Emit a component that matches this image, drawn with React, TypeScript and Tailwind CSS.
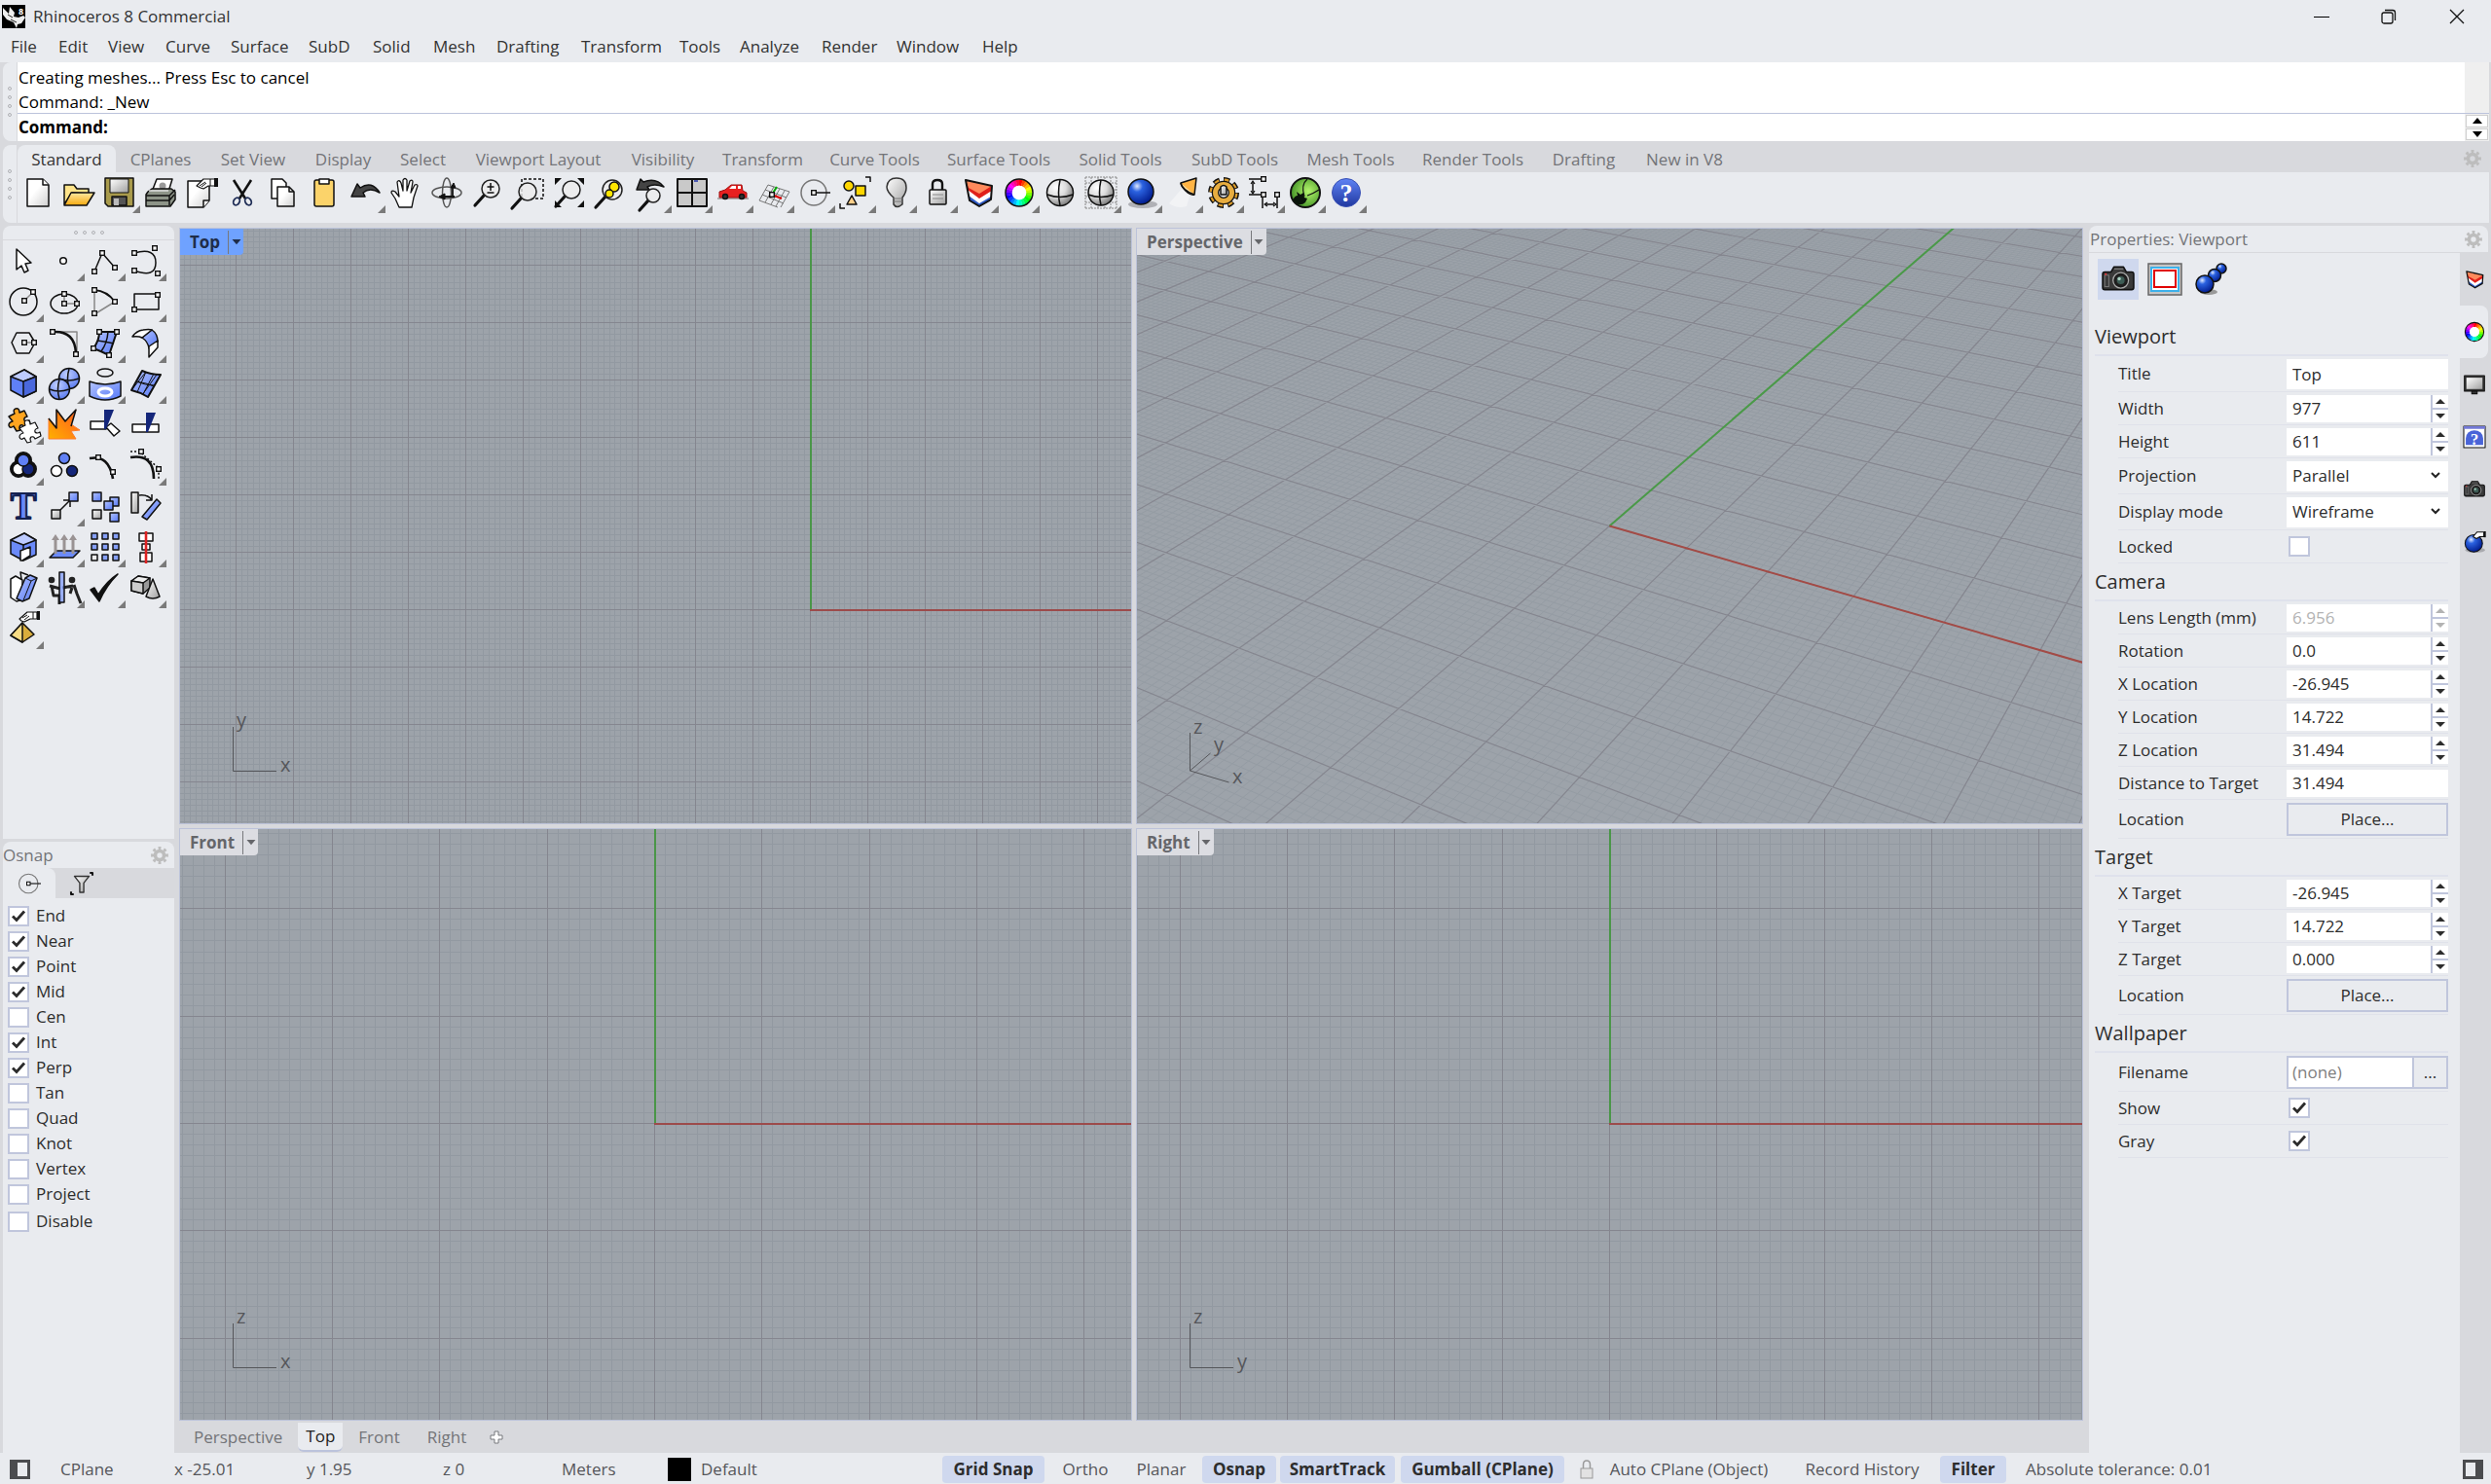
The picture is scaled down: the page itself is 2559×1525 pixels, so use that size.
import React, { ReactNode, useState } from 'react';
import clsx from 'clsx';

type Tool = { name: string; icon: ReactNode; more?: boolean };

/* ---------- icon helpers ---------- */

const Ico = ({ children, className = 'size-8' }: { children: ReactNode; className?: string }) => (
  <svg
    viewBox="0 0 32 32"
    className={clsx('block shrink-0 overflow-visible', className)}
    fill="none"
    stroke="#111"
    strokeWidth="1.5"
    strokeLinejoin="round"
    aria-hidden="true"
  >
    {children}
  </svg>
);

// small square control points
const Nodes = ({ at }: { at: [number, number][] }) => (
  <>
    {at.map(([x, y], i) => (
      <rect key={i} x={x - 2.3} y={y - 2.3} width="4.6" height="4.6" fill="#fff" strokeWidth="1.4" strokeLinejoin="miter" />
    ))}
  </>
);

const Gradients = () => (
  <svg className="absolute size-0" aria-hidden="true">
    <defs>
      <linearGradient id="blue" x1="0" y1="0" x2="1" y2="1">
        <stop offset="0" stopColor="#b4c4ff" />
        <stop offset="1" stopColor="#5578f6" />
      </linearGradient>
      <linearGradient id="gray" x1="0" y1="0" x2="1" y2="1">
        <stop offset="0" stopColor="#fff" />
        <stop offset="1" stopColor="#a0a0a0" />
      </linearGradient>
      <linearGradient id="paper" x1="0" y1="0" x2="1" y2="1">
        <stop offset="0.4" stopColor="#fff" />
        <stop offset="1" stopColor="#cfcfcf" />
      </linearGradient>
      <linearGradient id="gold" x1="0" y1="0" x2="0" y2="1">
        <stop offset="0" stopColor="#ffe9a0" />
        <stop offset="1" stopColor="#f5a90f" />
      </linearGradient>
      <linearGradient id="fire" x1="0" y1="1" x2="1" y2="0">
        <stop offset="0" stopColor="#ffb000" />
        <stop offset="1" stopColor="#ff5a1f" />
      </linearGradient>
      <linearGradient id="help" x1="0" y1="0" x2="0" y2="1">
        <stop offset="0" stopColor="#5f83f5" />
        <stop offset="1" stopColor="#2038a0" />
      </linearGradient>
      <radialGradient id="ball" cx="0.35" cy="0.3" r="0.75">
        <stop offset="0" stopColor="#fff" />
        <stop offset="0.5" stopColor="#dcdcdc" />
        <stop offset="1" stopColor="#777" />
      </radialGradient>
      <radialGradient id="blueball" cx="0.35" cy="0.28" r="0.75">
        <stop offset="0" stopColor="#dfe9ff" />
        <stop offset="0.3" stopColor="#2b62e0" />
        <stop offset="1" stopColor="#001a8c" />
      </radialGradient>
      <radialGradient id="softball" cx="0.4" cy="0.3" r="0.8">
        <stop offset="0" stopColor="#c0cfff" />
        <stop offset="1" stopColor="#4f72ee" />
      </radialGradient>
      <radialGradient id="greenball" cx="0.6" cy="0.45" r="0.65">
        <stop offset="0" stopColor="#b4f56c" />
        <stop offset="1" stopColor="#3c8d22" />
      </radialGradient>
    </defs>
  </svg>
);

const ColorWheel = ({ className }: { className?: string }) => (
  <Ico className={className}>
    <g transform="rotate(-90 16 16)">
      {Array.from({ length: 24 }, (_, i) => (
        <circle
          key={i}
          cx="16"
          cy="16"
          r="10.5"
          pathLength="24"
          stroke={`hsl(${i * 15} 100% 50%)`}
          strokeWidth="6.5"
          strokeDasharray="1.1 22.9"
          strokeDashoffset={-i}
        />
      ))}
    </g>
    <circle cx="16" cy="16" r="14" />
    <circle cx="16" cy="16" r="7.2" fill="#fff" stroke="none" />
  </Ico>
);

const LayersIcon = ({ className }: { className?: string }) => (
  <Ico className={className}>
    <g stroke="none">
      <path d="M5 16l12 9 12-7v5l-12 7-10-6z" fill="#2f5cc8" />
      <path d="M4 11l13 9 13-8-1 8-12 7-11-8z" fill="#fff" />
      <path d="M3 4l14 12 13-8v6l-13 8-12-9z" fill="#e0201a" />
      <path d="M3 3l27 6-13 8L6 11z" fill="#ff8a5c" />
    </g>
    <path d="M3 3l27 6-1 14-12 7-10-6z" strokeWidth="2" />
  </Ico>
);

const CameraIcon = ({ className }: { className?: string }) => (
  <Ico className={className}>
    <path d="M1 11q0-2 2-2h6l3-5h9l3 5h5q2 0 2 2v13q0 2-2 2H3q-2 0-2-2z" fill="#3a3a3a" />
    <path d="M12 6h9M3 12h4v11H3z" stroke="#777" strokeWidth="1" />
    <circle cx="18.5" cy="17" r="7.5" fill="#1b1b1b" stroke="#aaa" strokeWidth="1.2" />
    <circle cx="18.5" cy="17" r="4.5" fill="#3d5c55" stroke="#222" />
    <circle cx="17" cy="15.5" r="1.6" fill="#a8d0c0" stroke="none" />
    <circle cx="4" cy="11" r="1" fill="#e33" stroke="none" />
  </Ico>
);

const BlueBall = ({ className, hand }: { className?: string; hand?: boolean }) => (
  <Ico className={className}>
    <ellipse cx="17" cy="28" rx="15" ry="4" fill="#8b8b90" stroke="none" opacity="0.6" />
    <circle cx="15" cy={hand ? 18 : 15} r="13" fill="url(#blueball)" />
    {hand && <path d="M14 8l6-7h10v7h-6l-5 3z" fill="#fff" />}
    {hand && <path d="M30 0h3v9h-3z" fill="#111" stroke="none" />}
  </Ico>
);

const OsnapIcon = ({ className }: { className?: string }) => (
  <Ico className={className}>
    <circle cx="15" cy="16" r="13" stroke="#777" />
    <path d="M17 16h15" />
    <Nodes at={[[15, 16]]} />
  </Ico>
);

const Gear = () => (
  <svg viewBox="0 0 20 20" className="size-4.5 text-[#bdbdbd]" aria-hidden="true">
    <circle cx="10" cy="10" r="5" fill="none" stroke="currentColor" strokeWidth="4" />
    <circle cx="10" cy="10" r="8.3" fill="none" stroke="currentColor" strokeWidth="3.2" pathLength="16" strokeDasharray="1 1" strokeDashoffset="0.5" />
  </svg>
);

const Magnifier = ({ x = 19, y = 12, r = 9 }: { x?: number; y?: number; r?: number }) => (
  <>
    <path d={`M${x - r * 0.7} ${y + r * 0.7}L${x - r - 7} ${y + r + 8}`} strokeWidth="3.2" strokeLinecap="round" />
    <circle cx={x} cy={y} r={r} fill="#ececec" fillOpacity="0.8" stroke="#222" />
  </>
);

/* ---------- tool definitions ---------- */

const mainTools: Tool[] = [
  { name: 'New', icon: <Ico><path d="M5 2h16l6 6v22H5z" fill="url(#paper)" /><path d="M21 2v6h6" fill="#fff" /></Ico> },
  { name: 'Open', icon: <Ico><path d="M1 28V8h10l3 4h12v5l-17-1z" fill="#ffe48a" /><path d="M1 29l7-13h24l-8 13z" fill="url(#gold)" /></Ico> },
  { name: 'Save', more: true, icon: <Ico><path d="M1 1h29v29H4l-3-3z" fill="#a99b4c" /><path d="M6 2h19v14H6z" fill="url(#gray)" strokeWidth="1" /><path d="M8 20h15v9H8z" fill="#555" /><path d="M10 22h5v7h-5z" fill="#bbb" stroke="none" /></Ico> },
  { name: 'Print', icon: <Ico><path d="M7 15l5-13h16l-4 13z" fill="#fff" /><circle cx="18" cy="9" r="3.5" fill="#999" stroke="none" /><path d="M3 15l4-3h20l4 3v8l-5 7H1V18z" fill="#8d9488" /><path d="M1 19h24l6-6M1 24h24l5-6M25 19v10" /><path d="M4 14h20" stroke="#ddd" /></Ico> },
  { name: 'Notes', icon: <Ico><path d="M2 4h22v20l-6 7H2z" fill="url(#paper)" /><path d="M18 31v-7h6" fill="#fff" /><path d="M11 9l7-7h12v7h-7l-5 3-3-1z" fill="#fff" strokeWidth="1.2" /><path d="M14 9l6-4M16 10l5-4M25 2v7" strokeWidth="1" /><path d="M29 1h4v9h-4z" fill="#111" stroke="none" /></Ico> },
  { name: 'Cut', icon: <Ico><path d="M7 3l12 19M25 3L13 22" strokeWidth="2.6" /><ellipse cx="10" cy="25" rx="3" ry="4" stroke="#1e2c55" strokeWidth="1.8" transform="rotate(30 10 25)" /><ellipse cx="22" cy="25" rx="3" ry="4" stroke="#1e2c55" strokeWidth="1.8" transform="rotate(-30 22 25)" /></Ico> },
  { name: 'Copy', icon: <Ico><path d="M4 2h11l4 4v16H4z" fill="#fff" /><path d="M10 10h12l5 5v15H10z" fill="url(#paper)" /><path d="M22 10v5h5" /></Ico> },
  { name: 'Paste', icon: <Ico><rect x="6" y="3" width="20" height="27" rx="2" fill="#fbd36a" /><path d="M11 7V2h10v5z" fill="#fff" /></Ico> },
  { name: 'Undo', more: true, icon: <Ico><path d="M2 20l6-13 3 4q12-8 20 5-10-6-17 0l2 4z" fill="#444" /></Ico> },
  { name: 'Pan', icon: <Ico><path d="M9 31l-4-9-4-6q0-3 4-1l4 5L7 5q2-3 4 1l2 8V3q2-3 4 0v11l3-10q3-2 3 1l-2 11 4-8q3-1 3 1l-4 12-2 10z" fill="#fff" strokeWidth="1.3" /></Ico> },
  { name: 'Rotate view', icon: <Ico><ellipse cx="16" cy="16" rx="15" ry="6" stroke="#555" /><ellipse cx="16" cy="16" rx="4.5" ry="15" stroke="#555" /><path d="M8 20l6-3v6zM20 11l3-5 2 5z" fill="#111" strokeWidth="1" /><path d="M12 20h12M22 8v12" strokeWidth="1.8" /></Ico> },
  { name: 'Zoom dynamic', icon: <Ico><Magnifier /><path d="M15.500 10h7M19 6v8M15.500 16h7" /></Ico> },
  { name: 'Zoom window', icon: <Ico><path d="M9 20V2h22v20H18" strokeDasharray="3 2" /><Magnifier x={15} y={15} /></Ico> },
  { name: 'Zoom extents', icon: <Ico><path d="M1 1h7L1 8zM31 1h-7l7 7zM1 31h7l-7-7zM31 31h-7l7-7z" fill="#111" stroke="none" /><Magnifier x={18} y={13} /></Ico> },
  { name: 'Zoom selected', icon: <Ico><Magnifier x={18} y={13} r={10} /><circle cx="20" cy="10" r="5" fill="#ffe600" /><circle cx="15" cy="17" r="4" fill="#ffe600" /></Ico> },
  { name: 'Undo view', more: true, icon: <Ico><path d="M1 13l4-11 3 3q13-5 21 5-10-4-17 0l2 3z" fill="#444" /><Magnifier x={18} y={19} r={7} /></Ico> },
  { name: 'Four viewports', more: true, icon: <Ico><rect x="1" y="2" width="30" height="28" fill="#c9c9c9" strokeWidth="2" /><path d="M16 2v28M1 16h30" strokeWidth="2" /><path d="M18 4h4" stroke="#2233aa" /></Ico> },
  { name: 'Set view', more: true, icon: <Ico><path d="M0 22h32" stroke="#999" /><path d="M2 15l6-2 6-5h11l1 6 4 2v5H2z" fill="#e82020" stroke="#a01010" strokeWidth="1" /><path d="M12 12l3-3h4v3zM21 9h3v3h-3z" fill="#fff" stroke="none" /><circle cx="8" cy="20" r="2.500" fill="#333" /><circle cx="25" cy="20" r="2.500" fill="#333" /></Ico> },
  { name: 'CPlane', more: true, icon: <Ico><path d="M10 8l22 7M7 13l22 8M4 18l22 9M1 24l19 7M10 8L1 24M16 10L7 26M22 12l-9 16M27 14l-9 16M32 15l-9 16" stroke="#777" strokeWidth="1" /><path d="M14 18l5-8" stroke="#0a0" strokeWidth="2" /><path d="M14 18l10 4" stroke="#d00" strokeWidth="2" /><Nodes at={[[14, 18]]} /></Ico> },
  { name: 'Osnap', more: true, icon: <OsnapIcon /> },
  { name: 'Select', more: true, icon: <Ico><circle cx="9" cy="9" r="5" fill="#ffd600" /><rect x="16" y="9" width="10" height="10" fill="#ffd600" /><path d="M12 19l5 9H7z" fill="#ffd08a" /><path d="M26 0h5v5M0 27v5h5" /></Ico> },
  { name: 'Visibility', more: true, icon: <Ico><path d="M16 1q10 0 10 10 0 5-4 10v7q-6 5-9 0v-7q-7-6-7-11 1-9 10-9z" fill="url(#gray)" stroke="#333" /><path d="M13 22h9M13 25h9" stroke="#777" strokeWidth="1" /></Ico> },
  { name: 'Lock', more: true, icon: <Ico><path d="M11 13V7q0-4 5-4t5 4v6" strokeWidth="2.4" /><rect x="8" y="13" width="17" height="15" rx="1" fill="url(#gray)" /><path d="M11 18h11M11 22h11" stroke="#888" strokeWidth="1" /></Ico> },
  { name: 'Layers', more: true, icon: <LayersIcon /> },
  { name: 'Properties', more: true, icon: <ColorWheel /> },
  { name: 'Shade', icon: <Ico><circle cx="16" cy="16" r="13.500" fill="url(#ball)" /><path d="M16 3q-3 13 0 26M3 18q13 5 26 0" /></Ico> },
  { name: 'Display', more: true, icon: <Ico><path d="M0 0h32M0 6h32M0 13h32M0 20h32M0 26h32M0 32h32M0 0v32M6 0v32M13 0v32M20 0v32M26 0v32M32 0v32" stroke="#888" strokeWidth="1" strokeDasharray="2 1" /><circle cx="16" cy="16" r="13" fill="url(#ball)" /><path d="M16 3q-3 13 0 26M3 18q13 5 26 0" /></Ico> },
  { name: 'Render', more: true, icon: <BlueBall /> },
  { name: 'Spotlight', more: true, icon: <Ico><path d="M21 5L2 27q8 6 18 3l5-17z" fill="#fff" opacity="0.4" stroke="none" /><path d="M14 6l16-5-2 17q-4 1-9-4t-5-8z" fill="#ffb445" /><path d="M14 6q2 8 14 12" fill="#ffe0a0" /></Ico> },
  { name: 'Options', more: true, icon: <Ico><circle cx="16" cy="16" r="12" stroke="#111" strokeWidth="8" pathLength="16" strokeDasharray="1.2 0.8" /><circle cx="16" cy="16" r="12" stroke="#dd9d2c" strokeWidth="5" pathLength="16" strokeDasharray="0.9 1.1" strokeDashoffset="-0.15" /><circle cx="16" cy="16" r="8.500" strokeWidth="7.500" /><circle cx="16" cy="16" r="8.500" stroke="#e8ad3f" strokeWidth="5" /><path d="M13 10q3-3 6 0v8h-6z" fill="url(#gray)" /></Ico> },
  { name: 'Dimension', more: true, icon: <Ico><path d="M0 2h12M0 18h12M4 5v11M14 20v12M29 20v12M17 28h9" /><path d="M2 7l2-3 2 3M2 14l2 3 2-3M19 26l-3 2 3 2M25 26l3 2-3 2" strokeWidth="1.2" /><Nodes at={[[15, 2], [15, 18], [29, 18]]} /></Ico> },
  { name: 'Grasshopper', more: true, icon: <Ico><circle cx="16" cy="16" r="15" fill="url(#greenball)" strokeWidth="2" /><path d="M3 24q2-5 5-5l-1-4 4 3 3-2 1 5 3 1-2 4q-3 3-8 2z" fill="#0a140a" stroke="none" /><path d="M15 20q-4-12 3-18M18 19q6-2 12-6" strokeWidth="1.2" /></Ico> },
  {
    name: 'Help',
    more: true,
    icon: (
      <Ico>
        <circle cx="16" cy="16" r="14.500" fill="url(#help)" stroke="#3950b5" strokeWidth="1" />
        <text x="16" y="25" textAnchor="middle" fontFamily="Liberation Serif, serif" fontSize="26" fontWeight="700" fill="#fff" stroke="none">?</text>
      </Ico>
    ),
  },
];

const puzzle = 'M1 8l6-3q-2-4 1-5 4-1 4 4l5-2 3 6q-4 1-3 4 2 2 5 0l1 4-6 3q-1-3-4-2-2 2 0 5l-4 1-3-5q-4 3-5-1 0-3 4-4z';

const sideTools: Tool[] = [
  { name: 'Pointer', icon: <Ico><path d="M9 4v21l5-4 3 7 4-2-3-7 6-1z" fill="#fff" /></Ico> },
  { name: 'Point', more: true, icon: <Ico><circle cx="15" cy="16" r="3.300" fill="#fff" /></Ico> },
  { name: 'Polyline', more: true, icon: <Ico><path d="M5 27l8-19 13 15" /><Nodes at={[[5, 27], [13, 8], [26, 23]]} /></Ico> },
  { name: 'Curve', more: true, icon: <Ico><path d="M4 8q22-6 22 10T4 26" /><Nodes at={[[4, 8], [25, 3], [4, 26], [28, 29]]} /></Ico> },
  { name: 'Circle', more: true, icon: <Ico><circle cx="16" cy="16" r="14" /><path d="M16 16l9-9" stroke="#888" /><Nodes at={[[17, 15], [26, 6]]} /></Ico> },
  { name: 'Ellipse', more: true, icon: <Ico><ellipse cx="16" cy="18" rx="14" ry="10" /><path d="M16 8v10h13" stroke="#888" /><Nodes at={[[16, 8], [16, 18], [29, 18]]} /></Ico> },
  { name: 'Arc', more: true, icon: <Ico><path d="M5 4v25l21-13" stroke="#888" /><path d="M5 4q13 1 21 12" strokeWidth="2" /><Nodes at={[[5, 4], [5, 28], [26, 16]]} /></Ico> },
  { name: 'Rectangle', more: true, icon: <Ico><path d="M4 8h25v16H4z" /><Nodes at={[[4, 24], [28, 9]]} /></Ico> },
  { name: 'Polygon', more: true, icon: <Ico><path d="M4 16L9 6h13l6 10-6 11H9z" /><path d="M17 16h11" stroke="#888" /><Nodes at={[[17, 16], [27, 16]]} /></Ico> },
  { name: 'Fillet', more: true, icon: <Ico><path d="M4 5h25v23" stroke="#888" /><path d="M5 5q22-1 23 22" strokeWidth="2.6" /><Nodes at={[[4, 5], [28, 28]]} /></Ico> },
  { name: 'Surface', more: true, icon: <Ico><path d="M10 5h18q-4 12-8 24-8-4-16-7 6-8 6-17z" fill="url(#blue)" strokeWidth="2" /><path d="M19 5q-1 12-7 20M8 14q8 1 17 3" /><Nodes at={[[10, 5], [28, 5], [4, 22], [20, 29]]} /></Ico> },
  { name: 'Sweep', more: true, icon: <Ico><path d="M12 11l10-8q6 4 6 12l-9 7q-1-7-7-11z" fill="url(#blue)" /><path d="M2 10q4-6 11-7 6-1 9 0l-10 8q-4-2-10-1zM19 20l9-6v7l-9 10z" fill="#fff" /></Ico> },
  { name: 'Box', more: true, icon: <Ico><path d="M3 9l14-7 12 7v15l-13 6-13-7z" fill="#5f80f8" /><path d="M3 9l14-7 12 7-13 5z" fill="#bdcbff" /><path d="M16 14l13-5v15l-13 6z" fill="#4a68dc" /></Ico> },
  { name: 'Sphere', more: true, icon: <Ico><circle cx="21" cy="11" r="10.500" fill="url(#softball)" /><path d="M21 1q-3 10 0 20M11 11q9 4 20 0" /><circle cx="11" cy="22" r="10.500" fill="url(#softball)" /><path d="M11 12q-3 10 0 20M1 22q9 4 20 0" /></Ico> },
  { name: 'Boolean', more: true, icon: <Ico><ellipse cx="16" cy="5" rx="8" ry="4" /><path d="M0 14q16 6 32 0v15q-16 8-32 0z" fill="url(#blue)" /><ellipse cx="16" cy="25" rx="7" ry="4" stroke="#fff" strokeWidth="3" /></Ico> },
  { name: 'Mesh', more: true, icon: <Ico><path d="M1 23L12 3q9 4 19 4L18 30q-8-5-17-7z" fill="url(#blue)" strokeWidth="2" /><path d="M6 14q9 4 19 4M16 4L7 25M24 6L13 27M1 23l15-19M12 28L27 7M6 14l10 2 8 3" strokeWidth="1" /></Ico> },
  { name: 'Join', more: true, icon: <Ico><path d={puzzle} fill="#ffa51f" /><g transform="translate(11 12)"><path d={puzzle} fill="#fff" strokeWidth="1.2" /></g></Ico> },
  { name: 'Explode', icon: <Ico><path d="M0 31V10l9 10L8 1l9 12L28 1l-5 15 9 6-9 1 5 8z" fill="url(#fire)" strokeWidth="1" stroke="#ff7a2a" /><path d="M0 10l8 10L8 1l9 12L28 1l-5 17" /></Ico> },
  { name: 'Trim', icon: <Ico><path d="M1 13h16v8H1zM17 19l5-4 9 8-6 5z" fill="#fff" /><path d="M15 1h10l-8 20h-2z" fill="#14267a" stroke="none" /></Ico> },
  { name: 'Split', icon: <Ico><path d="M2 16h27v8H2z" fill="#fff" /><path d="M16 4h10l-8 20h-2z" fill="#14267a" stroke="none" /></Ico> },
  { name: 'Boolean union', more: true, icon: <Ico><g strokeWidth="5"><circle cx="16" cy="11" r="6.500" /><circle cx="11" cy="20" r="6.500" /><circle cx="21" cy="20" r="6.500" /></g><circle cx="11" cy="20" r="6" fill="#fff" /><circle cx="21" cy="20" r="6" fill="#14267a" /><circle cx="16" cy="11" r="6" fill="#6080f5" /></Ico> },
  { name: 'Group', icon: <Ico><circle cx="16" cy="9" r="5.500" fill="#6080f5" /><circle cx="8" cy="22" r="5.500" fill="#fff" /><circle cx="24" cy="22" r="5.500" fill="#14267a" /></Ico> },
  { name: 'Edit points', icon: <Ico><path d="M0 9q20-4 24 21" strokeWidth="2.600" /><Nodes at={[[9, 8], [24, 23]]} /></Ico> },
  { name: 'Control points', more: true, icon: <Ico><path d="M0 8q24-4 24 22" strokeWidth="2.600" /><path d="M0 2h9l20 17v12" strokeDasharray="2 2" /><Nodes at={[[11, 2], [29, 20]]} /></Ico> },
  { name: 'Text', icon: <Ico><text x="16" y="29" textAnchor="middle" fontFamily="Liberation Serif, serif" fontSize="40" fontWeight="700" fill="#6888f8" stroke="#14204f" strokeWidth="2">T</text></Ico> },
  { name: 'Move', more: true, icon: <Ico><path d="M12 20l9-9M15 10h7v7" /><rect x="3" y="20" width="9" height="9" fill="url(#gray)" /><rect x="21" y="2" width="9" height="9" fill="url(#blue)" /></Ico> },
  { name: 'Copy objects', icon: <Ico><rect x="3" y="2" width="9" height="9" fill="url(#blue)" /><rect x="21" y="7" width="9" height="9" fill="url(#blue)" /><rect x="15" y="11" width="9" height="9" fill="url(#blue)" /><rect x="3" y="20" width="9" height="9" fill="url(#gray)" /><rect x="21" y="23" width="9" height="9" fill="url(#blue)" /></Ico> },
  { name: 'Rotate', icon: <Ico><rect x="1" y="2" width="7" height="21" fill="url(#gray)" /><path d="M12 27l15-18 4 4-14 17z" fill="url(#blue)" /><path d="M9 5q9-1 13 5M22 4v6h-6" /></Ico> },
  { name: 'Extract', more: true, icon: <Ico><path d="M3 9l14-7 12 7v15l-13 6-13-7z" fill="#6b8af9" /><path d="M3 9l14-7 12 7-13 5z" fill="#bdcbff" /><path d="M16 14v16" /><path d="M13 20l10-4v9l-8 5h-2z" fill="#fff" /></Ico> },
  { name: 'Extrude', more: true, icon: <Ico><path d="M1 27l7-7h24l-7 7z" fill="#6b8af9" /><path d="M7 23V7M16 23V7M25 23V7" stroke="#9a9393" strokeWidth="3" /><path d="M3 9l4-6 4 6zM12 9l4-6 4 6zM21 9l4-6 4 6z" fill="#9a9393" stroke="none" /></Ico> },
  { name: 'Array', more: true, icon: <Ico>{[2, 13, 24].map((y) => [2, 13, 24].map((x) => <rect key={`${x}-${y}`} x={x} y={y} width="6" height="6" fill={x === 2 && y === 24 ? '#eee' : '#86a0f8'} />))}</Ico> },
  { name: 'Align', more: true, icon: <Ico><rect x="9" y="2" width="14" height="8" fill="#fff" /><rect x="12" y="13" width="8" height="6" fill="#fff" /><rect x="10" y="22" width="12" height="9" fill="#fff" /><path d="M16 0v33" stroke="#d22" strokeWidth="2.600" /></Ico> },
  { name: 'Shear', more: true, icon: <Ico><path d="M3 7l5-3 7 4v20l-6 2-6-4z" fill="#fff" /><path d="M9 27l9-21 5-3 7 3-8 21-7 3z" fill="url(#blue)" /><path d="M18 6l6 3 6-3M24 9l-8 20" strokeWidth="1" /><path d="M14 7L13 0l8 3" /></Ico> },
  { name: 'Constrain', more: true, icon: <Ico><circle cx="3" cy="8" r="3.300" fill="#222" stroke="none" /><circle cx="24" cy="8" r="3.300" fill="#222" stroke="none" /><path d="M1 14l11 3M3 14l2 10h6v9M25 14l-11 2M26 13l3 9 4 10M24 16l-2 6" strokeWidth="3" stroke="#222" /><rect x="11" y="0" width="5" height="31" fill="#86a0f8" fillOpacity="0.8" /></Ico> },
  { name: 'Check', more: true, icon: <Ico><path d="M1 18l4-2 4 7Q18 9 29 2 17 14 10 30z" fill="#111" /></Ico> },
  { name: 'Solids', more: true, icon: <Ico><path d="M1 9l7-5 12 2v10l-7 6-12-3z" fill="#999" /><path d="M1 9l7-5 12 2-7 5z" fill="#eee" /><path d="M1 9l12 2v11L1 19z" fill="#ccc" /><path d="M23 7l7 18q-7 4-14 0z" fill="url(#gray)" /></Ico> },
  { name: 'Pyramid', more: true, icon: <Ico><path d="M15 10l12 12-12 8-12-7z" fill="#d9ad3c" /><path d="M15 10v20L3 23z" fill="#f7dc84" /><path d="M12 6l8-7h10v7h-7l-6 3-3-1z" fill="#fff" strokeWidth="1.200" /><path d="M15 5l5-3M17 7l5-4M26-1v7" strokeWidth="1" /><path d="M30-2h3v9h-3z" fill="#111" stroke="none" /></Ico> },
];

const menus = [
  ['File', 'w-[49px]'], ['Edit', 'w-[51px]'], ['View', 'w-[59px]'], ['Curve', 'w-[67px]'], ['Surface', 'w-[80px]'],
  ['SubD', 'w-[66px]'], ['Solid', 'w-[62px]'], ['Mesh', 'w-[65px]'], ['Drafting', 'w-[87px]'], ['Transform', 'w-[101px]'],
  ['Tools', 'w-[62px]'], ['Analyze', 'w-[84px]'], ['Render', 'w-[77px]'], ['Window', 'w-[88px]'], ['Help', 'w-[60px]'],
];

const toolTabs = [
  ['Standard', 'w-[101px]'], ['CPlanes', 'w-[92px]'], ['Set View', 'w-[98px]'], ['Display', 'w-[87px]'], ['Select', 'w-[77px]'],
  ['Viewport Layout', 'w-[160px]'], ['Visibility', 'w-[96px]'], ['Transform', 'w-[109px]'], ['Curve Tools', 'w-[121px]'],
  ['Surface Tools', 'w-[134px]'], ['Solid Tools', 'w-[116px]'], ['SubD Tools', 'w-[119px]'], ['Mesh Tools', 'w-[119px]'],
  ['Render Tools', 'w-[132px]'], ['Drafting', 'w-[96px]'], ['New in V8', 'w-[111px]'],
];

/* ---------- small parts ---------- */

const ToolButton = ({ tool }: { tool: Tool }) => (
  <button type="button" aria-label={tool.name} className="relative grid size-10.5 shrink-0 place-items-center">
    {tool.icon}
    {tool.more && (
      <svg viewBox="0 0 8 8" className="absolute right-0 bottom-0 size-2" aria-hidden="true">
        <path d="M8 0v8H0z" fill="#7a7a7a" />
      </svg>
    )}
  </button>
);

const Dots = ({ row }: { row?: boolean }) => (
  <span className={clsx('flex gap-[5px]', row ? 'flex-row' : 'flex-col')}>
    {[0, 1, 2, 3].map((i) => (
      <span key={i} className="size-1 rounded-full border border-[#b0b1b5]" />
    ))}
  </span>
);

const CheckBox = ({ id, checked = false }: { id: string; checked?: boolean }) => (
  <span className="grid">
    <input
      id={id}
      type="checkbox"
      defaultChecked={checked}
      className="peer col-start-1 row-start-1 h-[21px] w-[22px] appearance-none border-2 border-[#c0c6dc] bg-white"
    />
    <svg viewBox="0 0 22 20" className="pointer-events-none invisible col-start-1 row-start-1 h-[21px] w-[22px] peer-checked:visible" aria-hidden="true">
      <path d="M5 10l4 4 8-9" fill="none" stroke="#2b2b2b" strokeWidth="2.8" />
    </svg>
  </span>
);

/* ---------- viewports ---------- */

const gridPath = (ox: number, oy: number, step: number, every: number) => {
  let d = '';
  for (let i = -160; i <= 160; i++) {
    if ((i % 10 === 0) !== (every === 10)) continue;
    const p = Math.round(i * step);
    d += `M${ox + p + 0.5} -200V1800M-200 ${oy + p + 0.5}H2600`;
  }
  return d;
};

const FlatGrid = ({ ox, oy, step }: { ox: number; oy: number; step: number }) => (
  <svg className="absolute inset-0 size-full" shapeRendering="crispEdges" aria-hidden="true">
    <path d={gridPath(ox, oy, step, 1)} stroke="#9299a1" />
    <path d={gridPath(ox, oy, step, 10)} stroke="#85868f" />
    <rect x={ox} y={oy} width="3000" height="2" fill="#9c4b4b" />
    <rect x={ox} y="0" width="2" height={oy} fill="#4a9648" />
  </svg>
);

// Camera looks at the origin from azimuth -60, elevation 30
const K = 0.0598;
const FOCAL = 1487;
const project = (x: number, y: number) => {
  const depth = 1 - K * (0.433 * x - 0.75 * y);
  const sx = (FOCAL * K * (0.866 * x + 0.5 * y)) / depth;
  const sy = (FOCAL * K * (0.25 * x - 0.433 * y)) / depth;
  return `${sx.toFixed(1)} ${sy.toFixed(1)}`;
};

const perspectivePath = (every: number) => {
  let d = '';
  const size = 30;
  const near = 7;
  for (let i = -size * 10; i <= size * 10; i++) {
    if ((i % 10 === 0) !== (every === 10)) continue;
    const c = i / 10;
    // keep each line in front of the near plane
    const yMin = Math.max(-size, (0.433 * c - near) / 0.75);
    if (yMin < size) d += `M${project(c, yMin)}L${project(c, size)}`;
    const xMax = Math.min(size, (near + 0.75 * c) / 0.433);
    if (xMax > -size) d += `M${project(-size, c)}L${project(xMax, c)}`;
  }
  return d;
};

const PerspectiveGrid = () => (
  <svg className="absolute inset-0 size-full" aria-hidden="true">
    <svg x="50%" y="50%" overflow="visible">
      <path d={perspectivePath(1)} stroke="#8f979f" strokeWidth="1" opacity="0.55" />
      <path d={perspectivePath(10)} stroke="#85868f" strokeWidth="1.2" />
      <path d={`M${project(0, 0)}L${project(0, 16)}`} stroke="#4a9a48" strokeWidth="2" />
      <path d={`M${project(0, 0)}L${project(12, 0)}`} stroke="#a34b46" strokeWidth="2" />
    </svg>
  </svg>
);

const AxisIcon = ({ across, up }: { across: string; up: string }) => (
  <svg className="absolute bottom-0 left-0 h-[130px] w-[130px]" fill="#55565a" fontSize="20" aria-hidden="true">
    <path d="M54.5 31v45.500H99" fill="none" stroke="#55565a" />
    <text x="103" y="77">{across}</text>
    <text x="58" y="31">{up}</text>
  </svg>
);

const PerspectiveAxisIcon = () => (
  <svg className="absolute bottom-0 left-0 h-[130px] w-[130px]" fill="#55565a" fontSize="20" aria-hidden="true">
    <path d="M54.5 37v39l40 12M54.500 76l21-18" fill="none" stroke="#55565a" />
    <text x="58" y="38">z</text>
    <text x="79" y="56">y</text>
    <text x="98" y="89">x</text>
  </svg>
);

const Viewport = ({ title, active, children }: { title: string; active?: boolean; children: ReactNode }) => (
  <section aria-label={title} className="relative min-w-0 overflow-hidden border border-[#bcc3da] bg-[#9da3aa]">
    {children}
    <button
      type="button"
      className={clsx(
        'relative flex h-[27px] items-center gap-2 rounded-br-sm pl-2.5 font-bold',
        active ? 'bg-[#6fa2ff] text-[#1f2d4a]' : 'bg-[#dcdde2] text-[#65666a]',
      )}
    >
      {title}
      <span className="flex h-6 w-4 items-center justify-center border-l border-[#77787c]">
        <svg viewBox="0 0 12 8" className="h-1.5 w-2.5" aria-hidden="true">
          <path d="M0 0h12L6 7z" fill="currentColor" />
        </svg>
      </span>
    </button>
  </section>
);

/* ---------- properties panel ---------- */

const Row = ({ label, id, h = 'h-[34px]', children }: { label: string; id?: string; h?: string; children: ReactNode }) => (
  <div className={clsx('ml-6 flex items-center border-b border-[#e0e2ea]', h)}>
    <label htmlFor={id} className="flex-1 whitespace-nowrap">{label}</label>
    <div className="w-[166px]">{children}</div>
  </div>
);

const SectionTitle = ({ children }: { children: string }) => (
  <h2 className="flex h-[39px] items-center border-b-2 border-[#dfe2ec] text-[20px]">{children}</h2>
);

const TextRow = ({ label, value, h, tall }: { label: string; value: string; h?: string; tall?: boolean }) => (
  <Row label={label} id={label} h={h}>
    <input id={label} defaultValue={value} className={clsx('block w-full bg-white pl-1.5 outline-none', tall ? 'h-[31px]' : 'h-7')} />
  </Row>
);

const NumberRow = ({ label, value, disabled }: { label: string; value: string; disabled?: boolean }) => (
  <Row label={label} id={label}>
    <div className={clsx('flex h-7 bg-white', disabled && 'text-[#b3b3b3]')}>
      <input id={label} defaultValue={value} disabled={disabled} className="w-0 flex-1 pl-1.5 outline-none" />
      <div className="flex w-4.5 flex-col border-l-2 border-[#c0c6dc]">
        <button type="button" aria-label={`Increase ${label}`} disabled={disabled} className="grid flex-1 place-items-center border-b-2 border-[#c0c6dc]">
          <svg viewBox="0 0 10 5" className="h-[5px] w-2.5"><path d="M0 5h10L5 0z" fill="currentColor" /></svg>
        </button>
        <button type="button" aria-label={`Decrease ${label}`} disabled={disabled} className="grid flex-1 place-items-center">
          <svg viewBox="0 0 10 5" className="h-[5px] w-2.5"><path d="M0 0h10L5 5z" fill="currentColor" /></svg>
        </button>
      </div>
    </div>
  </Row>
);

const SelectRow = ({ label, options }: { label: string; options: string[] }) => (
  <Row label={label} id={label} h="h-[37px]">
    <div className="grid items-center">
      <select id={label} className="col-start-1 row-start-1 h-[31px] w-full appearance-none bg-white pl-1.5 outline-none">
        {options.map((o) => <option key={o}>{o}</option>)}
      </select>
      <svg viewBox="0 0 10 8" className="pointer-events-none col-start-1 row-start-1 mr-2 h-2 w-2.5 justify-self-end" aria-hidden="true">
        <path d="M1 1l4 4 4-4" fill="none" stroke="#222" strokeWidth="2" />
      </svg>
    </div>
  </Row>
);

const PlaceRow = ({ id }: { id: string }) => (
  <Row label="Location" id={id} h="h-10">
    <button id={id} type="button" className="h-[34px] w-full border-2 border-[#c0c6dc]">Place...</button>
  </Row>
);

const PropertiesPanel = () => (
  <aside className="flex w-[410px] shrink-0 flex-col text-[#2d2d2d]">
    <header className="flex h-7 items-center justify-between rounded-t-lg border-b border-[#d8d9dd] bg-[#e9ebef] pr-1.5 pl-px text-[#737478]">
      Properties: Viewport
      <button type="button" aria-label="Panel options"><Gear /></button>
    </header>
    <div className="flex flex-1 bg-[#e9ebef]">
      <div className="flex-1 pr-3 pl-1.5">
        <div className="flex h-[67px] gap-1.5 pt-1.5 pl-[3px]">
          <button type="button" aria-label="Viewport" className="grid size-[42px] place-items-center bg-[#cfd8ee]"><CameraIcon className="size-[34px]" /></button>
          <button type="button" aria-label="Frame" className="grid size-[42px] place-items-center">
            <svg viewBox="0 0 36 34" className="h-[34px] w-9">
              <rect x="1" y="1" width="34" height="32" fill="#c6c6c6" stroke="#666" strokeWidth="1.5" />
              <rect x="4" y="5" width="28" height="24" fill="#fff" stroke="#3db0ea" strokeWidth="2" />
              <rect x="7" y="8" width="22" height="17" fill="#fff" stroke="#e00000" strokeWidth="2" />
            </svg>
          </button>
          <button type="button" aria-label="Material" className="grid size-[42px] place-items-center">
            <Ico>
              <ellipse cx="13" cy="29" rx="9" ry="3" fill="#999" stroke="none" />
              <circle cx="26" cy="5" r="5" fill="url(#blueball)" />
              <circle cx="19" cy="12" r="6.5" fill="url(#blueball)" />
              <circle cx="9" cy="21" r="9" fill="url(#blueball)" />
            </Ico>
          </button>
        </div>
        <SectionTitle>Viewport</SectionTitle>
        <TextRow label="Title" value="Top" h="h-[37px]" tall />
        <NumberRow label="Width" value="977" />
        <NumberRow label="Height" value="611" />
        <SelectRow label="Projection" options={['Parallel', 'Perspective']} />
        <SelectRow label="Display mode" options={['Wireframe', 'Shaded']} />
        <Row label="Locked" id="locked"><div className="pl-0.5"><CheckBox id="locked" /></div></Row>
        <SectionTitle>Camera</SectionTitle>
        <NumberRow label="Lens Length (mm)" value="6.956" disabled />
        <NumberRow label="Rotation" value="0.0" />
        <NumberRow label="X Location" value="-26.945" />
        <NumberRow label="Y Location" value="14.722" />
        <NumberRow label="Z Location" value="31.494" />
        <TextRow label="Distance to Target" value="31.494" />
        <PlaceRow id="camera-place" />
        <SectionTitle>Target</SectionTitle>
        <NumberRow label="X Target" value="-26.945" />
        <NumberRow label="Y Target" value="14.722" />
        <NumberRow label="Z Target" value="0.000" />
        <PlaceRow id="target-place" />
        <SectionTitle>Wallpaper</SectionTitle>
        <Row label="Filename" id="filename" h="h-10">
          <div className="flex h-[34px]">
            <input id="filename" placeholder="(none)" className="w-0 flex-1 border-2 border-[#c0c6dc] bg-white pl-1 outline-none placeholder:text-[#808080]" />
            <button type="button" aria-label="Browse" className="w-[35px] border-2 border-l-0 border-[#c0c6dc]">...</button>
          </div>
        </Row>
        <Row label="Show" id="show"><div className="pl-0.5"><CheckBox id="show" checked /></div></Row>
        <Row label="Gray" id="gray-box"><div className="pl-0.5"><CheckBox id="gray-box" checked /></div></Row>
      </div>
      <nav className="flex w-[29px] flex-col bg-[#d8d9dd]">
        {[
          ['Layers', <LayersIcon className="size-5" />],
          ['Properties', <ColorWheel className="size-5.5" />],
          ['Display', <Ico className="size-5.5"><rect x="1" y="3" width="30" height="23" fill="#333" /><rect x="4" y="6" width="24" height="17" fill="url(#gray)" stroke="none" /><path d="M12 26h8v4h-8z" fill="#333" /></Ico>],
          ['Help', <Ico className="size-5.5"><rect width="32" height="32" fill="#fff" /><rect width="32" height="4" fill="#7379d6" stroke="none" /><path d="M3 28V18a13 12 0 0126 0v10z" fill="#4964d8" stroke="none" /><text x="16" y="27" textAnchor="middle" fontFamily="Liberation Serif, serif" fontSize="24" fontWeight="700" fill="#fff" stroke="none">?</text></Ico>],
          ['Named views', <CameraIcon className="size-5.5" />],
          ['Rendering', <BlueBall className="size-5.5" hand />],
        ].map(([name, icon], i) => (
          <button
            key={i}
            type="button"
            aria-label={name as string}
            className={clsx('grid h-[54px] place-items-center', i === 1 && 'rounded-r-lg bg-[#e9ebef]')}
          >
            {icon}
          </button>
        ))}
      </nav>
    </div>
  </aside>
);

/* ---------- left side ---------- */

const snaps: [string, boolean][] = [
  ['End', true], ['Near', true], ['Point', true], ['Mid', true], ['Cen', false], ['Int', true], ['Perp', true],
  ['Tan', false], ['Quad', false], ['Knot', false], ['Vertex', false], ['Project', false], ['Disable', false],
];

const LeftSide = () => (
  <div className="flex w-44 shrink-0 flex-col gap-[3px] text-[#2d2d2d]">
    <div className="h-[630px] rounded-t-lg bg-[#e9ebef]">
      <div className="flex h-[15px] items-center justify-center border-b border-[#d8d9dd]"><Dots row /></div>
      <div className="grid w-42 grid-cols-4">
        {sideTools.map((t) => <ToolButton key={t.name} tool={t} />)}
      </div>
    </div>
    <section className="flex-1 rounded-t-lg bg-[#e9ebef]">
      <header className="flex h-[27px] items-center justify-between pr-1.5 text-[#737478]">
        Osnap
        <button type="button" aria-label="Osnap options"><Gear /></button>
      </header>
      <div className="flex h-[31px] bg-[#d8d9dd]">
        <button type="button" aria-label="Object snaps" className="grid w-[54px] place-items-center rounded-tr-lg bg-[#e9ebef]"><OsnapIcon className="size-6" /></button>
        <button type="button" aria-label="Selection filter" className="grid w-[54px] place-items-center">
          <Ico className="size-5.5"><path d="M5 5h22l-8 10v14h-6V15z" fill="url(#gray)" stroke="#333" strokeWidth="2" /><path d="M28 0h4v4M0 28v4h4" strokeWidth="3" /></Ico>
        </button>
      </div>
      <ul className="pt-[5px] pl-[5px]">
        {snaps.map(([name, on]) => (
          <li key={name} className="flex h-[26px] items-center gap-[7px] last:mt-0.5">
            <CheckBox id={`snap-${name}`} checked={on} />
            <label htmlFor={`snap-${name}`}>{name}</label>
          </li>
        ))}
      </ul>
    </section>
  </div>
);

/* ---------- status bar ---------- */

const StatusToggle = ({ label, w, on }: { label: string; w: string; on?: boolean }) => (
  <button
    type="button"
    aria-pressed={!!on}
    className={clsx('h-7 shrink-0 rounded-sm text-center whitespace-nowrap', w, on && 'bg-[#cfd8ee] font-bold text-[#2d2d2d]')}
  >
    {label}
  </button>
);

const StatusBar = () => (
  <footer className="flex h-8 shrink-0 items-center bg-[#e9ebef] pt-0.5 pr-2 pl-2.5 text-[#55565a]">
    <button type="button" aria-label="Toggle left panel" className="mr-[31px] h-5 w-[21px] border-3 border-l-8 border-[#4b4c4f]" />
    <span className="w-[117px]">CPlane</span>
    <span className="w-[136px]">x -25.01</span>
    <span className="w-[140px]">y 1.95</span>
    <span className="w-[122px]">z 0</span>
    <span className="w-[109px]">Meters</span>
    <span className="mr-2.5 size-6 bg-black" />
    <span className="w-[248px]">Default</span>
    <StatusToggle label="Grid Snap" w="w-[105px]" on />
    <StatusToggle label="Ortho" w="w-[84px]" />
    <StatusToggle label="Planar" w="w-[72px]" />
    <span className="w-1.5" />
    <StatusToggle label="Osnap" w="w-[76px]" on />
    <span className="w-1" />
    <StatusToggle label="SmartTrack" w="w-[118px]" on />
    <span className="w-1.5" />
    <StatusToggle label="Gumball (CPlane)" w="w-[168px]" on />
    <svg viewBox="0 0 14 20" className="ml-4 h-5 w-3.5" aria-hidden="true">
      <path d="M3.500 9V5q0-4 3.500-4t3.500 4v4" fill="none" stroke="#999" strokeWidth="1.500" />
      <rect x="1" y="9" width="12" height="10" fill="#e2e2e2" stroke="#999" />
    </svg>
    <StatusToggle label="Auto CPlane (Object)" w="w-[196px]" />
    <StatusToggle label="Record History" w="w-[160px]" />
    <StatusToggle label="Filter" w="w-[68px]" on />
    <span className="ml-5 flex-1 whitespace-nowrap">Absolute tolerance: 0.01</span>
    <button type="button" aria-label="Toggle right panel" className="h-5 w-[21px] border-3 border-r-8 border-[#4b4c4f]" />
  </footer>
);

/* ---------- window ---------- */

const TitleBar = () => (
  <header className="flex h-[34px] shrink-0 items-center pl-0.5 text-[#333]">
    <svg viewBox="0 0 24 24" className="mr-2 size-6" aria-hidden="true">
      <rect width="24" height="24" />
      <path d="M1 3l6 6 1-7 5 6-1 4 5 1 5-2 2 2-4 6-4 1-1 4-3-6-7-3-4-5z" fill="#eee" />
      <path d="M6 10l5 3M9 15l6 3" stroke="#222" fill="none" />
      <text x="17" y="10" fill="#fff" fontSize="9" fontWeight="700">8</text>
    </svg>
    <h1 className="flex-1">Rhinoceros 8 Commercial</h1>
    <button type="button" aria-label="Minimize" className="grid h-full w-[69px] place-items-center"><span className="h-px w-4 bg-black" /></button>
    <button type="button" aria-label="Restore" className="grid h-full w-[69px] place-items-center">
      <svg viewBox="0 0 16 16" className="size-4" fill="none" stroke="#111" strokeWidth="1.3">
        <rect x="1" y="4" width="11" height="11" rx="2" />
        <path d="M4 1.500h8q2.500 0 2.500 2.500v8" />
      </svg>
    </button>
    <button type="button" aria-label="Close" className="grid h-full w-[71px] place-items-center">
      <svg viewBox="0 0 16 16" className="size-4" stroke="#111" strokeWidth="1.3"><path d="M1 1l14 14M15 1L1 15" /></svg>
    </button>
  </header>
);

const CommandArea = () => (
  <section className="flex h-[81px] shrink-0 text-black">
    <div className="mr-px ml-[3px] flex w-3.5 items-center justify-center rounded-l-lg bg-[#e9ebef]"><Dots /></div>
    <div className="flex flex-1 flex-col bg-white">
      <div className="h-[52px] pt-[3px] pl-px leading-[25px]">
        <p>Creating meshes... Press Esc to cancel</p>
        <p>Command: _New</p>
      </div>
      <div className="flex flex-1 items-center border-t border-[#bcc3dc] pl-px">
        <label htmlFor="command" className="font-bold">Command:</label>
        <input id="command" className="flex-1 outline-none" />
      </div>
    </div>
    <div className="mr-0.5 flex w-[25px] flex-col justify-end bg-[#efefef]">
      <div className="flex h-[29px] flex-col gap-px border-t border-[#bcc3dc] p-px">
        <button type="button" aria-label="Previous" className="grid flex-1 place-items-center border border-[#cfcfcf] bg-white">
          <svg viewBox="0 0 10 6" className="h-1.5 w-2.5"><path d="M0 6h10L5 0z" /></svg>
        </button>
        <button type="button" aria-label="Next" className="grid flex-1 place-items-center border border-[#cfcfcf] bg-white">
          <svg viewBox="0 0 10 6" className="h-1.5 w-2.5"><path d="M0 0h10L5 6z" /></svg>
        </button>
      </div>
    </div>
  </section>
);

const ToolBar = () => (
  <section className="mt-1 mr-0.5 flex h-20 shrink-0">
    <div className="mr-px ml-[3px] flex w-3.5 items-center justify-center rounded-l-lg bg-[#e9ebef]"><Dots /></div>
    <div className="flex min-w-0 flex-1 flex-col">
      <div className="flex h-7 items-stretch text-[#737478]">
        {toolTabs.map(([name, w], i) => (
          <button
            key={name}
            type="button"
            className={clsx('shrink-0 pt-0.5 text-center whitespace-nowrap', w, i === 0 && 'rounded-t-lg bg-[#e9ebef] text-[#333]')}
          >
            {name}
          </button>
        ))}
        <button type="button" aria-label="Toolbar options" className="mr-2 ml-auto"><Gear /></button>
      </div>
      <div className="flex flex-1 items-start bg-[#e9ebef]">
        {mainTools.map((t) => <ToolButton key={t.name} tool={t} />)}
      </div>
    </div>
  </section>
);

const viewTabs = ['Perspective', 'Top', 'Front', 'Right'];

const App = () => {
  const [view, setView] = useState('Top');

  return (
    <div className="flex h-screen min-h-[1300px] flex-col overflow-hidden bg-[#e9ebef] font-['Open_Sans','Noto_Sans',sans-serif] text-[17px] leading-6">
      <Gradients />
      <TitleBar />
      <nav className="flex h-[30px] shrink-0 items-center pb-0.5 pl-[11px] text-[#333]">
        {menus.map(([name, w]) => (
          <button key={name} type="button" className={clsx('shrink-0 text-left', w)}>{name}</button>
        ))}
      </nav>
      <div className="flex min-h-0 flex-1 flex-col bg-[#d8d9dd]">
        <CommandArea />
        <ToolBar />
        <main className="mt-[3px] mr-[3px] ml-[3px] flex min-h-0 flex-1">
          <LeftSide />
          <div className="flex min-w-0 flex-1 flex-col pt-0.5 pr-1.5 pl-[5px]">
            <div className="grid min-h-0 flex-1 grid-cols-[979fr_973fr] grid-rows-[613fr_609fr] gap-1">
              <Viewport title="Top" active={view === 'Top'}>
                <FlatGrid ox={647} oy={391} step={5.9} />
                <AxisIcon across="x" up="y" />
              </Viewport>
              <Viewport title="Perspective" active={view === 'Perspective'}>
                <PerspectiveGrid />
                <PerspectiveAxisIcon />
              </Viewport>
              <Viewport title="Front" active={view === 'Front'}>
                <FlatGrid ox={487} oy={302} step={11.03} />
                <AxisIcon across="x" up="z" />
              </Viewport>
              <Viewport title="Right" active={view === 'Right'}>
                <FlatGrid ox={485} oy={302} step={11.03} />
                <AxisIcon across="y" up="z" />
              </Viewport>
            </div>
            <div className="flex h-[33px] items-center gap-1 pl-[3px] text-[#737478]">
              {viewTabs.map((name) => (
                <button
                  key={name}
                  type="button"
                  onClick={() => setView(name)}
                  className={clsx('h-[30px]', name === view ? 'rounded-b-md border-b-2 border-[#bcc3dc] bg-[#e9ebef] px-2 text-[#222]' : 'mx-1.5 px-1.5')}
                >
                  {name}
                </button>
              ))}
              <button type="button" aria-label="New viewport tab" className="ml-2">
                <svg viewBox="0 0 14 14" className="size-3.5"><path d="M5 1h4v4h4v4H9v4H5V9H1V5h4z" fill="#fff" stroke="#77787c" /></svg>
              </button>
            </div>
          </div>
          <PropertiesPanel />
        </main>
      </div>
      <StatusBar />
    </div>
  );
};

export default App;
